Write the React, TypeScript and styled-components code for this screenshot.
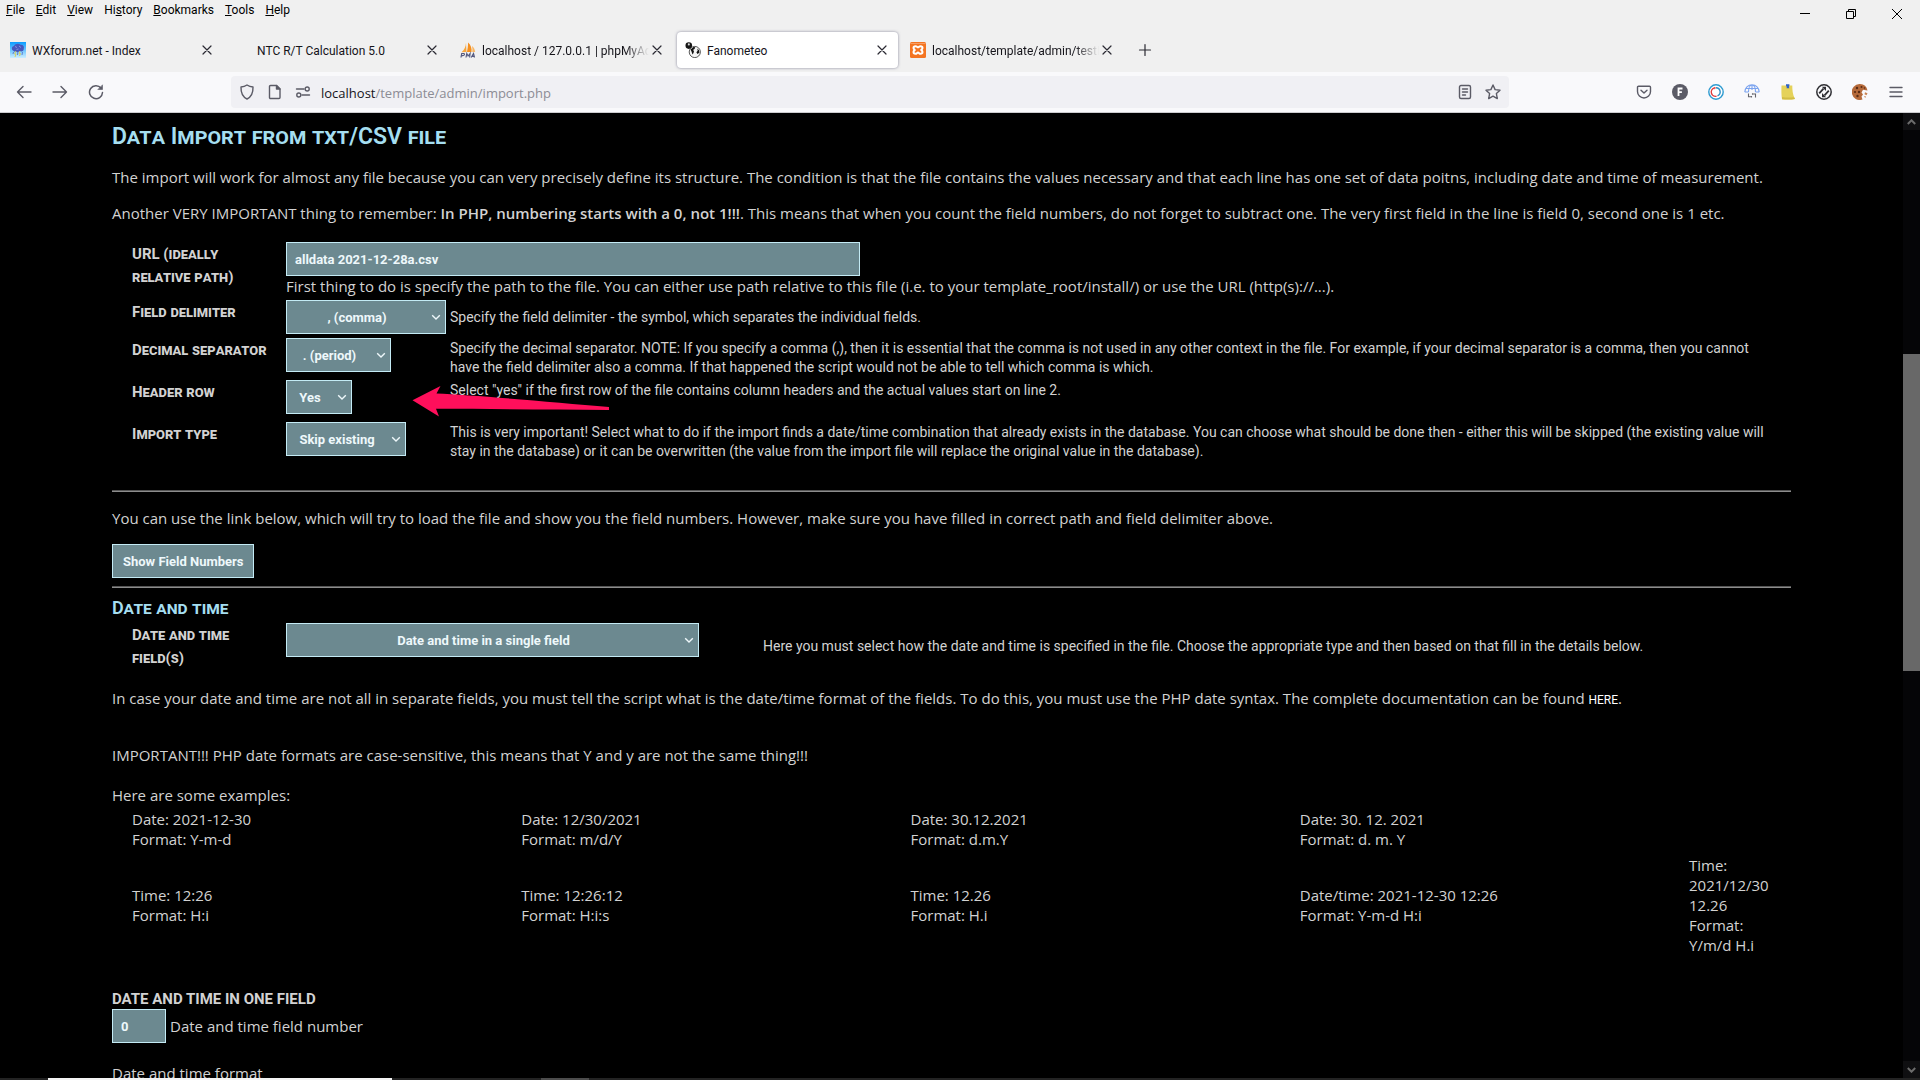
import React from "react";
import styled, { createGlobalStyle, css } from "styled-components";

const BODY = '"Open Sans", "Noto Sans", sans-serif';
const UI = 'Roboto, "Noto Sans", sans-serif';

const GlobalStyle = createGlobalStyle`
  *, *::before, *::after { box-sizing: border-box; }
  body { margin: 0; background: #000; }
  button, input, select { font: inherit; color: inherit; margin: 0; }
`;

/* ---------- window frame ---------- */

const Browser = styled.div`
  display: flex;
  flex-direction: column;
  height: 100vh;
  overflow: hidden;
  font-family: ${UI};
`;

const TitleBar = styled.header`
  display: flex;
  justify-content: space-between;
  height: 28px;
  flex: none;
  background: #f0f0f0;
  color: #000;
`;

const MenuBar = styled.nav`
  display: flex;
  padding-left: 1px;
  font-size: 12px;
  line-height: 20px;
`;

const MenuItem = styled.button`
  border: 0;
  background: none;
  padding: 0 6px 0 5px;
  height: 20px;
`;

const WindowButtons = styled.div`
  display: flex;
`;

const WindowButton = styled.button`
  display: grid;
  place-items: center;
  width: 46px;
  height: 28px;
  padding: 0;
  border: 0;
  background: none;
`;

const TabStrip = styled.div`
  display: flex;
  align-items: center;
  height: 44px;
  flex: none;
  background: #f0f0f0;
`;

const Tab = styled.div<{ $active?: boolean }>`
  display: flex;
  align-items: center;
  gap: 6px;
  flex: 0 1 221px;
  min-width: 0;
  height: 36px;
  margin: 0 2px;
  padding: 0 8px;
  border-radius: 4px;
  font-size: 12px;
  color: #15141a;
  ${(p) =>
    p.$active &&
    css`
      background: #fff;
      box-shadow: 0 0 3px rgba(90, 90, 120, 0.7);
    `}
`;

const Favicon = styled.span`
  width: 16px;
  height: 16px;
  flex: none;
  svg { display: block; }
`;

const TabTitle = styled.span<{ $fade?: boolean }>`
  flex: 1;
  min-width: 0;
  overflow: hidden;
  white-space: nowrap;
  padding-top: 2px;
  line-height: 20px;
  ${(p) => p.$fade && css`mask-image: linear-gradient(to left, transparent, #000 24px);`}
`;

const TabButton = styled.button<{ $wide?: boolean }>`
  display: grid;
  place-items: center;
  width: ${(p) => (p.$wide ? 40 : 16)}px;
  height: 16px;
  margin-left: ${(p) => (p.$wide ? 0 : -6)}px;
  flex: none;
  padding: 0;
  border: 0;
  background: none;
  color: #2b2a33;
`;

const Toolbar = styled.div`
  display: flex;
  align-items: center;
  height: 41px;
  flex: none;
  padding: 0 6px;
  background: #f9f9fb;
  border-bottom: 1px solid #cccccf;
  color: #5b5b66;
`;

const ToolButton = styled.button`
  display: grid;
  place-items: center;
  width: 36px;
  height: 32px;
  padding: 0;
  border: 0;
  background: none;
`;

const Spacer = styled.span`
  width: 117px;
  flex: none;
`;

const AddressBar = styled.div`
  display: flex;
  align-items: center;
  flex: 1;
  min-width: 0;
  height: 32px;
  padding: 0 2px;
  border-radius: 4px;
  background: #f0f0f4;
`;

const AddressButton = styled(ToolButton)`
  width: 28px;
`;

const Address = styled.div`
  flex: 1;
  padding: 2px 0 0 4px;
  font-family: ${BODY};
  font-size: 13px;
  line-height: 20px;
  color: #8c8c94;
  b { font-weight: 400; color: #15141a; }
`;

/* ---------- page ---------- */

const Viewport = styled.div`
  display: flex;
  flex: 1;
  min-height: 0;
  background: #000;
`;

const Page = styled.main`
  flex: 1;
  min-width: 0;
  overflow: hidden;
  padding: 10px 112px 0;
  font-family: ${BODY};
  font-size: 15px;
  line-height: 20px;
  color: #d2d2d2;
  b { font-weight: 600; }
`;

const Title = styled.h1`
  margin: 0;
  font-family: ${UI};
  font-size: 23px;
  line-height: 28px;
  font-weight: 600;
  font-variant: small-caps;
  color: #a5def0;
`;

const Section = styled.h2`
  margin: 8px 0 0;
  font-family: ${UI};
  font-size: 18px;
  line-height: 23px;
  font-weight: 600;
  font-variant: small-caps;
  color: #a5def0;
`;

const Paragraph = styled.p`
  margin: 16px 0;
`;

const Notice = styled(Paragraph)`
  margin: 35px 0 20px;
`;

const ListIntro = styled.p`
  margin: 0;
`;

const Rule = styled.hr<{ $far?: boolean }>`
  height: 2px;
  margin: ${(p) => (p.$far ? 27 : 8)}px 0 0;
  border: solid;
  border-width: 1px 0;
  border-color: #555 #8c8c8c #8c8c8c #555;
`;

const Fields = styled.div<{ $tight?: boolean }>`
  display: flex;
  flex-direction: column;
  gap: 3px;
  padding: ${(p) => (p.$tight ? 4 : 3)}px 0 2px 20px;
`;

const FieldRow = styled.div<{ $kind?: "full" | "wide"; $tall?: boolean }>`
  position: relative;
  display: grid;
  grid-template-columns: ${(p) =>
    p.$kind === "full" ? "154px 1fr" : p.$kind === "wide" ? "154px 477px 1fr" : "154px 164px 1fr"};
  min-height: ${(p) => (p.$kind === "full" ? 55 : p.$tall ? 39 : 35)}px;
`;

const FieldLabel = styled.label`
  padding: 1px 16px 0 0;
  font-family: ${UI};
  font-size: 15px;
  line-height: 23px;
  font-weight: 700;
  font-variant: small-caps;
`;

const Hint = styled.div<{ $middle?: boolean }>`
  align-self: ${(p) => (p.$middle ? "center" : "start")};
  padding-top: ${(p) => (p.$middle ? 0 : 1)}px;
  font-family: ${UI};
  font-size: 14px;
  line-height: 19px;
`;

const control = css`
  height: 34px;
  border: 1px solid #c4ebf5;
  border-radius: 0;
  background: #6c8990;
  color: #eef8fb;
  font-family: ${UI};
  font-size: 13px;
  font-weight: 700;
`;

const TextInput = styled.input<{ $w: number }>`
  ${control}
  display: block;
  width: ${(p) => p.$w}px;
  padding: 1px 8px 0;
`;

const SelectBox = styled.span<{ $w: number }>`
  position: relative;
  display: block;
  width: ${(p) => p.$w}px;
  height: 34px;
  svg {
    position: absolute;
    right: 5px;
    top: 14px;
    pointer-events: none;
  }
`;

const NativeSelect = styled.select`
  ${control}
  appearance: none;
  width: 100%;
  padding: 1px 24px 0 6px;
  text-align: center;
  text-align-last: center;
`;

const ActionButton = styled.button`
  ${control}
  display: block;
  padding: 1px 10px 0;
`;

const DocLink = styled.a`
  font-family: ${UI};
  font-size: 12px;
  color: #fff;
  text-decoration: none;
`;

const Examples = styled.div`
  display: grid;
  grid-template-columns: repeat(4, minmax(0, 389fr)) 102px;
  row-gap: 6px;
  align-items: center;
  padding: 4px 0 0 20px;
`;

const Example = styled.div`
  padding-right: 20px;
`;

const GroupTitle = styled.h3`
  margin: 34px 0 0;
  font-family: ${UI};
  font-size: 15px;
  line-height: 20px;
  font-weight: 700;
`;

const InlineField = styled.div`
  display: flex;
  align-items: center;
  gap: 4px;
`;

const FormatLabel = styled.p`
  margin: 20px 0 0;
`;

const Pointer = styled.svg`
  position: absolute;
  left: 280px;
  top: 5px;
`;

const Scrollbar = styled.div`
  display: flex;
  flex-direction: column;
  align-items: center;
  width: 17px;
  flex: none;
  background: #050507;
`;

const ScrollArrow = styled.span`
  display: grid;
  place-items: center;
  width: 17px;
  height: 17px;
  background: #0f0f11;
`;

const ScrollTrack = styled.div`
  display: flex;
  flex-direction: column;
  flex: 1;
  width: 100%;
`;

const ScrollGap = styled.span<{ $grow: number }>`
  flex: ${(p) => p.$grow} 1 0;
`;

const ScrollThumb = styled.span`
  flex: 317 1 0;
  background: #686868;
`;

const Taskbar = styled.footer`
  display: flex;
  height: 2px;
  flex: none;
  background: #232323;
`;

const TaskItem = styled.span<{ $from: number; $w: number; $tone: string }>`
  margin-left: ${(p) => p.$from}px;
  width: ${(p) => p.$w}px;
  background: ${(p) => p.$tone};
`;

/* ---------- icons ---------- */

const Stroke = ({ size = 16, w = 1.4, children }: { size?: number; w?: number; children: React.ReactNode }) => (
  <svg width={size} height={size} viewBox="0 0 16 16" fill="none" stroke="currentColor" strokeWidth={w} strokeLinecap="round" strokeLinejoin="round" aria-hidden>
    {children}
  </svg>
);

const CloseIcon = () => (
  <Stroke w={1.2}><path d="M4 4l8 8M12 4l-8 8" /></Stroke>
);

const Chevron = () => (
  <svg width="10" height="7" viewBox="0 0 10 7" fill="none" stroke="#eef8fb" strokeWidth="1.4" aria-hidden>
    <path d="M1.2 1.2L5 5l3.8-3.8" />
  </svg>
);

const WeatherIcon = () => (
  <svg width="16" height="16" viewBox="0 0 16 16" aria-hidden>
    <defs>
      <linearGradient id="sky" x1="0" y1="0" x2="0" y2="1">
        <stop offset="0" stopColor="#0a9bff" />
        <stop offset="1" stopColor="#cdeeff" />
      </linearGradient>
    </defs>
    <rect width="16" height="16" fill="url(#sky)" />
    <path d="M3 8.500C1 7 2 4 4 4c1-2.500 5-3 6.500-1.200C13 2.500 14.500 4.500 13.800 6.500 14 9 12 9.800 10.500 9.300 8.500 10.500 5 10.500 3 8.500z" fill="#4657bd" />
    <path d="M5 4.500l2 1M9 4l2 1.500M6.500 7.500l2-.5" stroke="#8492e0" strokeWidth="1" />
    <path d="M6 9l-1.500 3h1.500L5 15M10 9l-1 2.500h1.500L9.500 14" stroke="#d9cf62" strokeWidth="1" fill="none" />
    <path d="M3.500 10l-.5 2M12.500 10l-.5 3M7.800 10l-.3 3" stroke="#5c78c8" strokeWidth=".9" />
  </svg>
);

const PmaIcon = () => (
  <svg width="16" height="16" viewBox="0 0 16 16" aria-hidden>
    <path d="M6 1C5.800 4.500 4.500 8 1.500 10.200L6.500 10z" fill="#f7a63c" />
    <path d="M8 .5C11 3 12 6.500 11.500 10L7 10C7.500 7 8.200 4 8 .5z" fill="#f68f1e" />
    <path d="M12 4c2 1.500 3 4 3.200 6L12.300 10C12.600 8 12.400 6 12 4z" fill="#f9b763" />
    <path d="M1 15.500l.7-4h2q1 .2.700 1.200T2.700 13.700H1.600M6 15.500l.8-4 1.300 2.500 2-2.500-.5 4M11.200 15.500l2.300-4 1 4M12 14.300h2.200" stroke="#555a80" strokeWidth="1.200" fill="none" />
  </svg>
);

const GlobesIcon = () => (
  <svg width="16" height="16" viewBox="0 0 16 16" aria-hidden>
    <circle cx="3.800" cy="3.600" r="3.300" fill="#151515" />
    <path d="M3 1.200l2 .6-.6 1.700-1.600-.3z" fill="#ddd" />
    <circle cx="9.800" cy="10" r="5.600" fill="#f4f4f4" stroke="#333" strokeWidth=".8" />
    <path d="M5.500 7.500L8.500 5l1.800.3-.8 1.600-1.500 1 1 1.200-.5 2-1 1.500-1-3z" fill="#111" />
    <path d="M12.300 6.500l1.700 1.700.4 2.500-2 1.300-1-1.800 1.300-1.500z" fill="#111" />
  </svg>
);

const XamppIcon = () => (
  <svg width="16" height="16" viewBox="0 0 16 16" aria-hidden>
    <rect width="16" height="16" rx="1.500" fill="#f47421" />
    <path d="M.5 1.500h15" stroke="#f9b184" strokeWidth=".7" />
    <path d="M5.500 4.200C4.200 4.200 3.500 5 3.500 6s.7 1.500 1.300 2c-.6.500-1.300 1-1.300 2s.7 1.800 2 1.800S7 10.600 8 10.600s1.200 1.200 2.500 1.200 2-.8 2-1.800-.7-1.500-1.300-2c.6-.5 1.300-1 1.300-2s-.7-1.800-2-1.800S9 5.400 8 5.400 6.800 4.200 5.500 4.200z" fill="none" stroke="#fff" strokeWidth="2" strokeLinejoin="round" />
  </svg>
);

const ContainerIcon = () => (
  <svg width="16" height="16" viewBox="0 0 16 16" aria-hidden>
    <circle cx="8" cy="8" r="7.200" fill="#fff" stroke="#2e9bd0" strokeWidth="1.400" />
    <path d="M8 3.800a4.200 4.200 0 0 1 1.500 8.100" fill="none" stroke="#2e8fc6" strokeWidth="1.400" />
    <path d="M8.500 12.200A4.200 4.200 0 0 1 6.500 4" fill="none" stroke="#e23b3b" strokeWidth="1.400" />
    <path d="M6 2.800l2 1L6.600 5.600z" fill="#e23b3b" />
  </svg>
);

const GlobeSyncIcon = () => (
  <svg width="16" height="16" viewBox="0 0 16 16" fill="none" aria-hidden>
    <path d="M.8 8a7.200 7.200 0 0 1 14.400 0M1.500 4.500h13M.8 8h3.700M11.500 8h3.700M4.500 8C4.500 4 6 1 8 1s3.500 3 3.500 7M8 1v5" stroke="#7ba3ef" strokeWidth="1.100" />
    <path d="M4.500 9.500v3.200h3M7.500 13.500v-1.600M8.500 10h3v3.500M8.500 9.200v1.600" stroke="#66666d" strokeWidth="1.100" />
  </svg>
);

const NoteIcon = () => (
  <svg width="16" height="16" viewBox="0 0 16 16" aria-hidden>
    <path d="M1.500 1.500h10.800c0 4 .2 9 2.700 13.500-4 .8-9 .6-13 .3C1.300 11 1.300 6 1.500 1.500z" fill="#e5d25a" />
    <path d="M2 13c4 .8 8 .6 12 .3l1 1.700c-4 .8-9 .6-13 .3z" fill="#d3bd45" />
    <path d="M6 .3h3.400v1.500l-.5 1.200.5 1.200H6.500l.3-1.200L6 1.800z" fill="#2f62c4" />
  </svg>
);

const SyncIcon = () => (
  <svg width="16" height="16" viewBox="0 0 16 16" fill="none" aria-hidden>
    <circle cx="8" cy="8" r="7.200" stroke="#2f2f33" strokeWidth="1.500" />
    <path d="M3.200 9.300L7.500 4.600M8.500 11.400l4.300-4.700" stroke="#2f2f33" strokeWidth="1.800" />
    <path d="M5.800 2.800h4.200v4.200zM6 9v4.200h4.200z" fill="#2f2f33" />
  </svg>
);

const CookieIcon = () => (
  <svg width="16" height="16" viewBox="0 0 16 16" aria-hidden>
    <path d="M8 0a8 8 0 1 0 2.500 15.500L9.500 12.500l1.500-2-1.500-2L11 5.800l4.500.7A8 8 0 0 0 8 0z" fill="#b56a3a" />
    <path d="M13 8.200l2.500 1-1 2-2-1zM12 12l2 .5-.8 1.500z" fill="#c98252" />
    <g fill="#5a2c14">
      <circle cx="5" cy="4" r="1.200" /><circle cx="9.500" cy="3" r="1" /><circle cx="3" cy="8" r="1.100" />
      <circle cx="7" cy="8" r="1.200" /><circle cx="5.500" cy="12" r="1.200" /><circle cx="12.500" cy="4" r=".8" />
    </g>
  </svg>
);

const FIcon = () => (
  <svg width="16" height="16" viewBox="0 0 16 16" aria-hidden>
    <circle cx="8" cy="8" r="8" fill="#5b5b66" />
    <path d="M6.500 12V4.500h4M6.500 8.200h3.400" stroke="#fff" strokeWidth="1.800" fill="none" />
  </svg>
);

/* ---------- pieces ---------- */

const menus: [string, string, string][] = [
  ["", "F", "ile"], ["", "E", "dit"], ["", "V", "iew"], ["Hi", "s", "tory"],
  ["", "B", "ookmarks"], ["", "T", "ools"], ["", "H", "elp"],
];

const tabs: { title: string; icon?: React.ReactNode; active?: boolean; fade?: boolean }[] = [
  { title: "WXforum.net - Index", icon: <WeatherIcon /> },
  { title: "NTC R/T Calculation 5.0" },
  { title: "localhost / 127.0.0.1 | phpMyAdmin", icon: <PmaIcon />, fade: true },
  { title: "Fanometeo", icon: <GlobesIcon />, active: true },
  { title: "localhost/template/admin/testImport", icon: <XamppIcon />, fade: true },
];

const extensions: [string, React.ReactNode][] = [
  ["Pocket", <Stroke key="p" w={1.4}><path d="M2.500 2.200h11a1 1 0 0 1 1 1V7.500a6.500 6.500 0 0 1-13 0V3.200a1 1 0 0 1 1-1zM5 6.200L8 9l3-2.800" /></Stroke>],
  ["Account", <FIcon key="f" />],
  ["Containers", <ContainerIcon key="c" />],
  ["Translate", <GlobeSyncIcon key="g" />],
  ["Notes", <NoteIcon key="n" />],
  ["Sync", <SyncIcon key="s" />],
  ["Cookies", <CookieIcon key="k" />],
  ["Menu", <Stroke key="m" w={1.4}><path d="M2 3.500h12M2 8h12M2 12.500h12" /></Stroke>],
];

const examples: ([string, string] | null)[] = [
  ["Date: 2021-12-30", "Format: Y-m-d"],
  ["Date: 12/30/2021", "Format: m/d/Y"],
  ["Date: 30.12.2021", "Format: d.m.Y"],
  ["Date: 30. 12. 2021", "Format: d. m. Y"],
  null,
  ["Time: 12:26", "Format: H:i"],
  ["Time: 12:26:12", "Format: H:i:s"],
  ["Time: 12.26", "Format: H.i"],
  ["Date/time: 2021-12-30 12:26", "Format: Y-m-d H:i"],
  ["Time: 2021/12/30 12.26", "Format: Y/m/d H.i"],
];

function Select({ id, width, value }: { id: string; width: number; value: string }) {
  return (
    <SelectBox $w={width}>
      <NativeSelect id={id} defaultValue={value}>
        <option>{value}</option>
      </NativeSelect>
      <Chevron />
    </SelectBox>
  );
}

function BrowserChrome() {
  return (
    <>
      <TitleBar>
        <MenuBar>
          {menus.map(([a, k, b]) => (
            <MenuItem key={k + b}>{a}<u>{k}</u>{b}</MenuItem>
          ))}
        </MenuBar>
        <WindowButtons>
          <WindowButton aria-label="Minimize">
            <svg width="10" height="10" viewBox="0 0 10 10"><path d="M0 4.500h10" stroke="#000" /></svg>
          </WindowButton>
          <WindowButton aria-label="Restore">
            <svg width="10" height="10" viewBox="0 0 10 10" fill="none" stroke="#000"><path d="M.5 2.500h7v7h-7zM2.500 2.500v-2h7v7h-2" /></svg>
          </WindowButton>
          <WindowButton aria-label="Close">
            <svg width="10" height="10" viewBox="0 0 10 10"><path d="M0 0l10 10M10 0L0 10" stroke="#000" /></svg>
          </WindowButton>
        </WindowButtons>
      </TitleBar>
      <TabStrip>
        {tabs.map((t) => (
          <Tab key={t.title} $active={t.active}>
            <Favicon>{t.icon}</Favicon>
            <TabTitle $fade={t.fade}>{t.title}</TabTitle>
            <TabButton aria-label="Close tab"><CloseIcon /></TabButton>
          </Tab>
        ))}
        <TabButton $wide aria-label="New tab">
          <Stroke w={1.2}><path d="M8 2.500v11M2.500 8h11" /></Stroke>
        </TabButton>
      </TabStrip>
      <Toolbar>
        <ToolButton aria-label="Back"><Stroke><path d="M15 8H1.500M7 2.500L1.500 8 7 13.500" /></Stroke></ToolButton>
        <ToolButton aria-label="Forward"><Stroke><path d="M1 8h13.500M9 2.500L14.500 8 9 13.500" /></Stroke></ToolButton>
        <ToolButton aria-label="Reload">
          <Stroke w={1.500}><path d="M13 4a6.500 6.500 0 1 0 1.500 4.500" /><path d="M14.500 1.200v4.300h-4.300z" fill="currentColor" strokeWidth=".6" /></Stroke>
        </ToolButton>
        <Spacer />
        <AddressBar>
          <AddressButton aria-label="Protection"><Stroke><path d="M8 1c2 1.400 4 1.900 6 2 .2 5.500-1.500 9.800-6 12C3.500 12.800 1.800 8.500 2 3c2-.1 4-.6 6-2z" /></Stroke></AddressButton>
          <AddressButton aria-label="Site information"><Stroke><path d="M3.500 1.500h6L13 5v8.500a1 1 0 0 1-1 1H3.500a1 1 0 0 1-1-1v-11a1 1 0 0 1 1-1z" /><path d="M9.500 1.500V5H13z" fill="currentColor" /></Stroke></AddressButton>
          <AddressButton aria-label="Permissions"><Stroke><path d="M1.500 5h7.500M7 11h7.500" /><circle cx="12.200" cy="5" r="2" /><circle cx="3.800" cy="11" r="2" /></Stroke></AddressButton>
          <Address><b>localhost</b>/template/admin/import.php</Address>
          <AddressButton aria-label="Reader view"><Stroke><rect x="2.500" y="1.500" width="11" height="13" rx="1.500" /><path d="M5.500 5h5M5.500 8h5M5.500 11h3" /></Stroke></AddressButton>
          <AddressButton aria-label="Bookmark"><Stroke><path d="M8 1l2.100 4.600 4.900.6-3.600 3.400.9 5L8 12.200 3.700 14.600l.9-5L1 6.200l4.900-.6z" /></Stroke></AddressButton>
        </AddressBar>
        <Spacer />
        {extensions.map(([name, icon]) => (
          <ToolButton key={name} aria-label={name}>{icon}</ToolButton>
        ))}
      </Toolbar>
    </>
  );
}

function ImportSettings() {
  return (
    <Fields>
      <FieldRow $kind="full">
        <FieldLabel htmlFor="url">URL (ideally relative path)</FieldLabel>
        <div>
          <TextInput id="url" $w={574} defaultValue="alldata 2021-12-28a.csv" />
          First thing to do is specify the path to the file. You can either use path relative to this file (i.e. to your template_root/install/) or use the URL (http(s)://...).
        </div>
      </FieldRow>
      <FieldRow>
        <FieldLabel htmlFor="delimiter">Field delimiter</FieldLabel>
        <Select id="delimiter" width={160} value=", (comma)" />
        <Hint $middle>Specify the field delimiter - the symbol, which separates the individual fields.</Hint>
      </FieldRow>
      <FieldRow $tall>
        <FieldLabel htmlFor="decimal">Decimal separator</FieldLabel>
        <Select id="decimal" width={105} value=". (period)" />
        <Hint>
          Specify the decimal separator. NOTE: If you specify a comma (,), then it is essential that the comma is not used in any other context in the file. For example, if your decimal separator is a comma, then you cannot
          <br />
          have the field delimiter also a comma. If that happened the script would not be able to tell which comma is which.
        </Hint>
      </FieldRow>
      <FieldRow $tall>
        <FieldLabel htmlFor="header">Header row</FieldLabel>
        <Select id="header" width={66} value="Yes" />
        <Hint>Select "yes" if the first row of the file contains column headers and the actual values start on line 2.</Hint>
        <Pointer width="200" height="34" viewBox="0 0 200 34" aria-hidden>
          <path d="M.5 15.200L28.500 1 24.500 8.500C60 10 140 17 197 22v3C140 24.500 80 24 24 23.700L27 31.500z" fill="#ff0f5b" />
        </Pointer>
      </FieldRow>
      <FieldRow $tall>
        <FieldLabel htmlFor="type">Import type</FieldLabel>
        <Select id="type" width={120} value="Skip existing" />
        <Hint>
          This is very important! Select what to do if the import finds a date/time combination that already exists in the database. You can choose what should be done then - either this will be skipped (the existing value will
          <br />
          stay in the database) or it can be overwritten (the value from the import file will replace the original value in the database).
        </Hint>
      </FieldRow>
    </Fields>
  );
}

export default function App() {
  return (
    <Browser>
      <GlobalStyle />
      <BrowserChrome />
      <Viewport>
        <Page>
          <Title>Data Import from txt/CSV file</Title>
          <Paragraph>
            The import will work for almost any file because you can very precisely define its structure. The condition is that the file contains the values necessary and that each line has one set of data poitns, including date and time of measurement.
          </Paragraph>
          <Paragraph>
            Another VERY IMPORTANT thing to remember: <b>In PHP, numbering starts with a 0, not 1!!!</b>. This means that when you count the field numbers, do not forget to subtract one. The very first field in the line is field 0, second one is 1 etc.
          </Paragraph>
          <ImportSettings />
          <Rule $far />
          <Paragraph>
            You can use the link below, which will try to load the file and show you the field numbers. However, make sure you have filled in correct path and field delimiter above.
          </Paragraph>
          <ActionButton>Show Field Numbers</ActionButton>
          <Rule />
          <Section>Date and time</Section>
          <Fields $tight>
            <FieldRow $kind="wide">
              <FieldLabel htmlFor="datetime">Date and time field(s)</FieldLabel>
              <Select id="datetime" width={413} value="Date and time in a single field" />
              <Hint $middle>Here you must select how the date and time is specified in the file. Choose the appropriate type and then based on that fill in the details below.</Hint>
            </FieldRow>
          </Fields>
          <Paragraph>
            In case your date and time are not all in separate fields, you must tell the script what is the date/time format of the fields. To do this, you must use the PHP date syntax. The complete documentation can be found <DocLink href="#docs">HERE</DocLink>.
          </Paragraph>
          <Notice>IMPORTANT!!! PHP date formats are case-sensitive, this means that Y and y are not the same thing!!!</Notice>
          <ListIntro>Here are some examples:</ListIntro>
          <Examples>
            {examples.map((e, i) =>
              e ? (
                <Example key={i}>
                  <div>{e[0]}</div>
                  <div>{e[1]}</div>
                </Example>
              ) : (
                <span key={i} />
              )
            )}
          </Examples>
          <GroupTitle>DATE AND TIME IN ONE FIELD</GroupTitle>
          <InlineField>
            <TextInput id="field-number" $w={54} defaultValue="0" />
            <label htmlFor="field-number">Date and time field number</label>
          </InlineField>
          <FormatLabel>Date and time format</FormatLabel>
        </Page>
        <Scrollbar aria-hidden>
          <ScrollArrow>
            <svg width="9" height="6" viewBox="0 0 9 6" fill="none" stroke="#6c6c6c" strokeWidth="2"><path d="M.8 5l3.700-3.700L8.200 5" /></svg>
          </ScrollArrow>
          <ScrollTrack>
            <ScrollGap $grow={224} />
            <ScrollThumb />
            <ScrollGap $grow={390} />
          </ScrollTrack>
          <ScrollArrow>
            <svg width="9" height="6" viewBox="0 0 9 6" fill="none" stroke="#6c6c6c" strokeWidth="2"><path d="M.8 1l3.700 3.700L8.200 1" /></svg>
          </ScrollArrow>
        </Scrollbar>
      </Viewport>
      <Taskbar aria-hidden>
        <TaskItem $from={48} $w={344} $tone="#f4f4f4" />
        <TaskItem $from={149} $w={48} $tone="#4c4c4c" />
      </Taskbar>
    </Browser>
  );
}
